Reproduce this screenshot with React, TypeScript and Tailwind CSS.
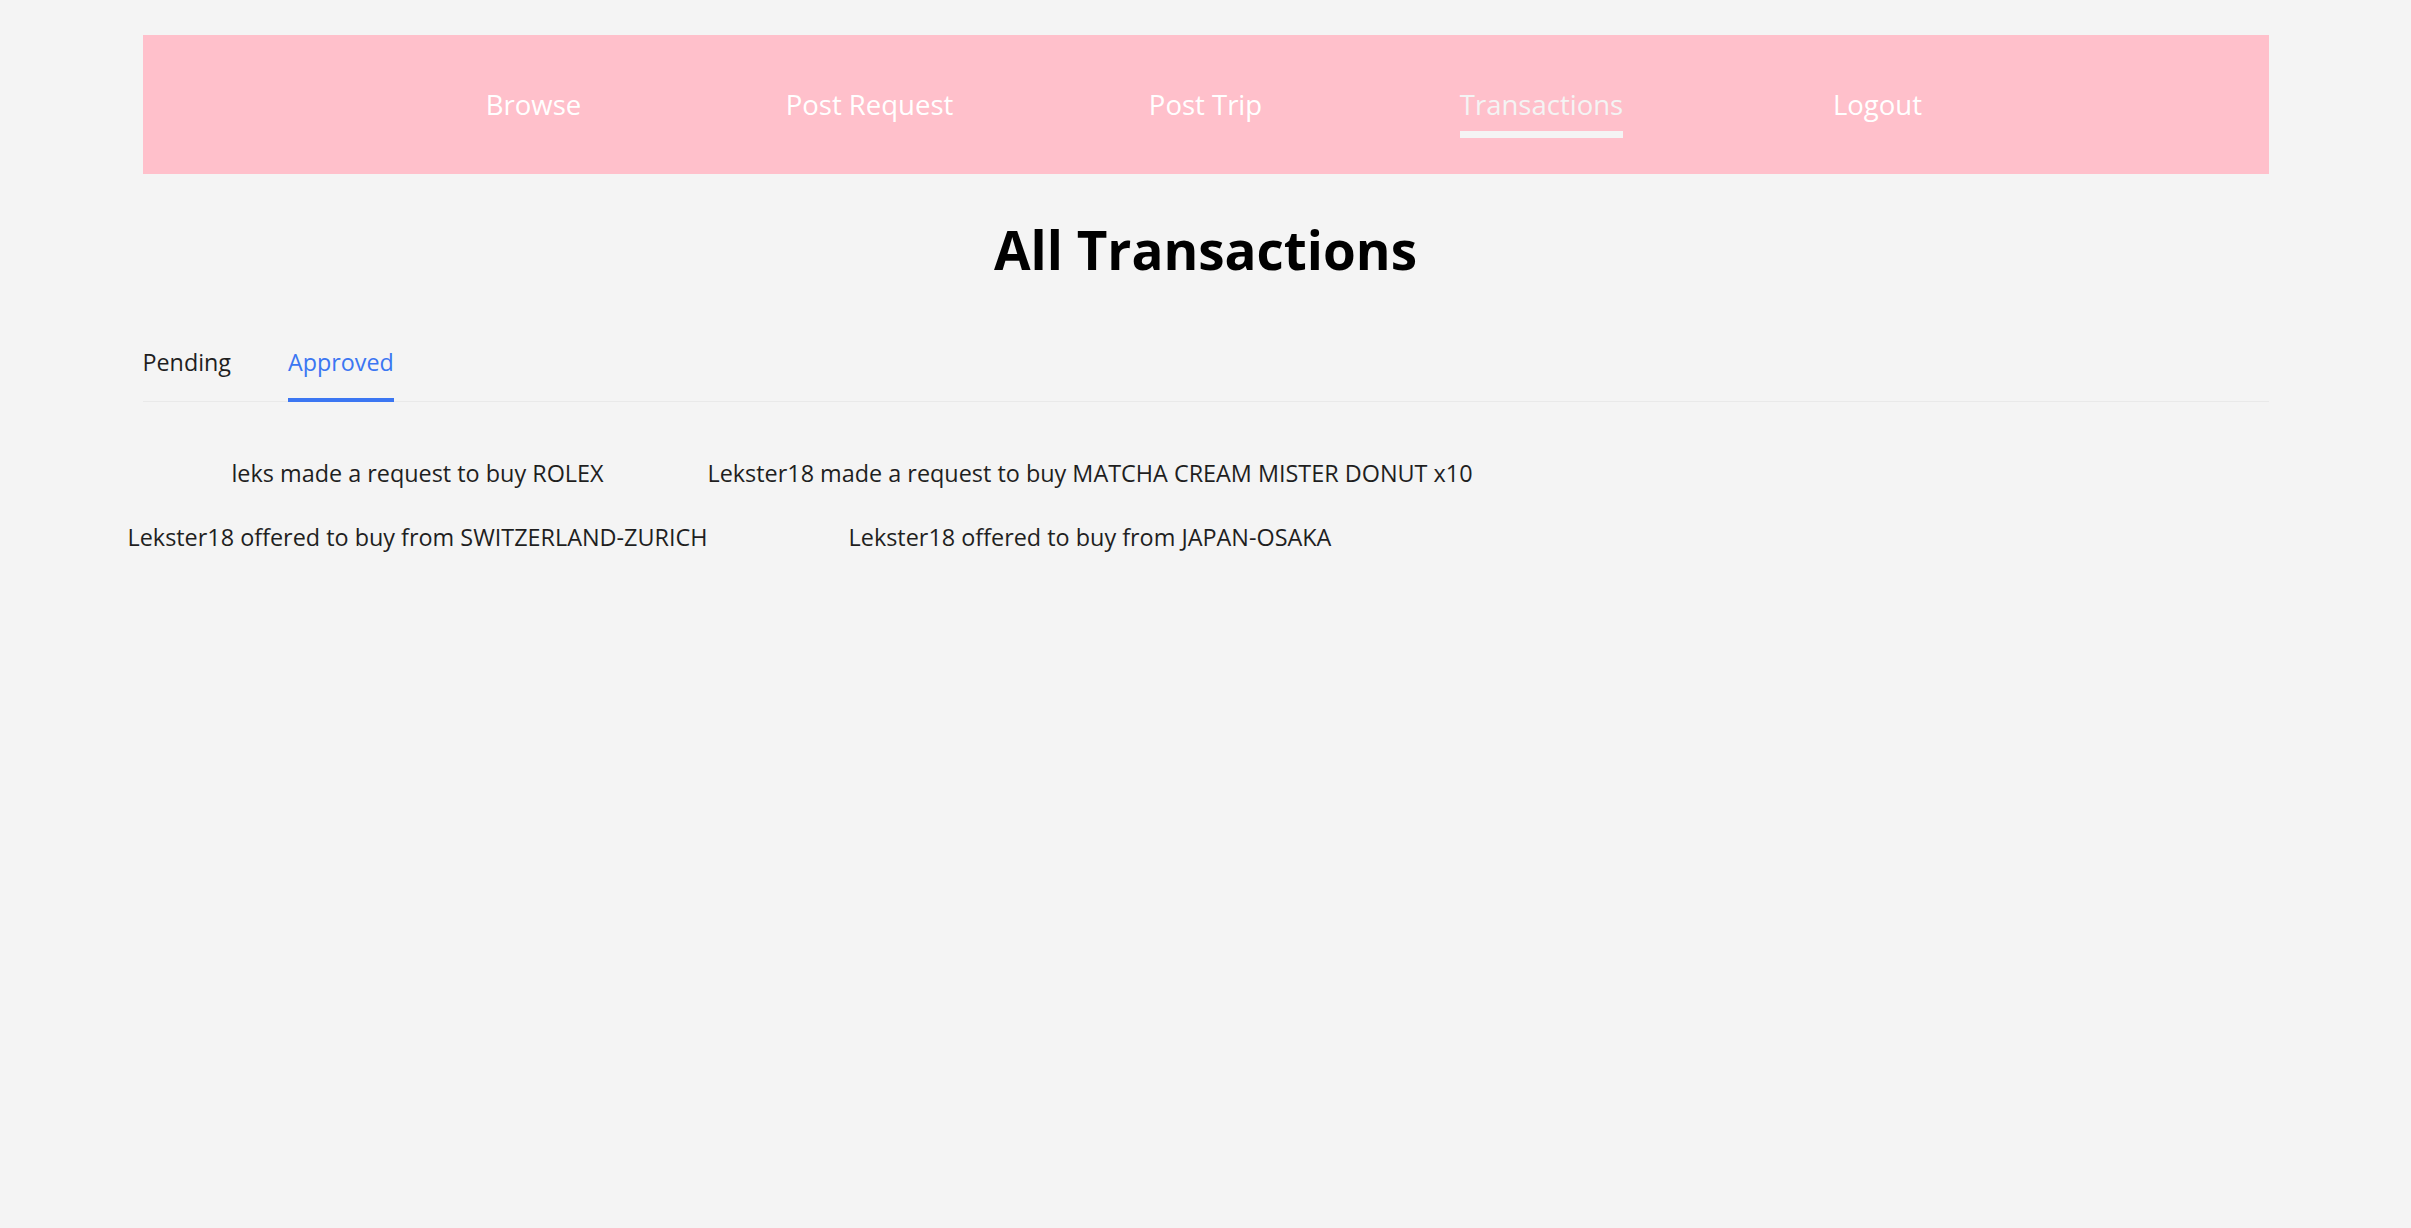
import { useState } from "react"

const navItems = ["Browse", "Post Request", "Post Trip", "Transactions", "Logout"]

const approved = [
    "leks made a request to buy ROLEX",
    "Lekster18 made a request to buy MATCHA CREAM MISTER DONUT x10",
    "Lekster18 offered to buy from SWITZERLAND-ZURICH",
    "Lekster18 offered to buy from JAPAN-OSAKA",
]

export default function App() {
    const [tab, setTab] = useState("Approved")

    return (
        <div className="min-h-screen bg-[#f4f4f4] pt-[35px] font-['Open_Sans','Noto_Sans',sans-serif]">
            <div className="w-[2126px] mx-auto">
                {/* Top nav */}
                <nav className="h-[139px] bg-[#ffc0cb] flex items-center justify-center">
                    {navItems.map((item) => (
                        <div key={item} className="w-[336px] flex justify-center">
                            <a
                                href="#"
                                className={
                                    "relative text-[27.5px] leading-[40px] " +
                                    (item === "Transactions" ? "text-[#f4f4f4]" : "text-white")
                                }
                            >
                                {item}
                                {item === "Transactions" && (
                                    <span className="absolute left-0 right-0 top-[46px] h-[7px] bg-[#f4f4f4]" />
                                )}
                            </a>
                        </div>
                    ))}
                </nav>

                <h1 className="mt-[38px] text-center text-[53px] leading-[76px] font-bold text-black">
                    All Transactions
                </h1>

                {/* Tabs */}
                <div className="mt-[56px] flex gap-[57px] border-b border-[#e9e9e9]">
                    {["Pending", "Approved"].map((t) => (
                        <button
                            key={t}
                            onClick={() => setTab(t)}
                            className={
                                "relative pb-[21px] text-[23.3px] leading-[36px] " +
                                (tab === t ? "text-[#3b76f2]" : "text-[#1f1f1f]")
                            }
                        >
                            {t}
                            {tab === t && (
                                <span className="absolute left-0 right-0 bottom-[-1px] h-[4px] bg-[#3b76f2]" />
                            )}
                        </button>
                    ))}
                </div>

                {/* Transaction list */}
                <div className="mt-[55px] -ml-[15px] w-fit grid grid-cols-[auto_auto] gap-y-[32px] text-center text-[23.4px] leading-[32px] text-[#1f1f1f]">
                    {tab === "Approved" &&
                        approved.map((line) => <div key={line}>{line}</div>)}
                </div>
            </div>
        </div>
    )
}
